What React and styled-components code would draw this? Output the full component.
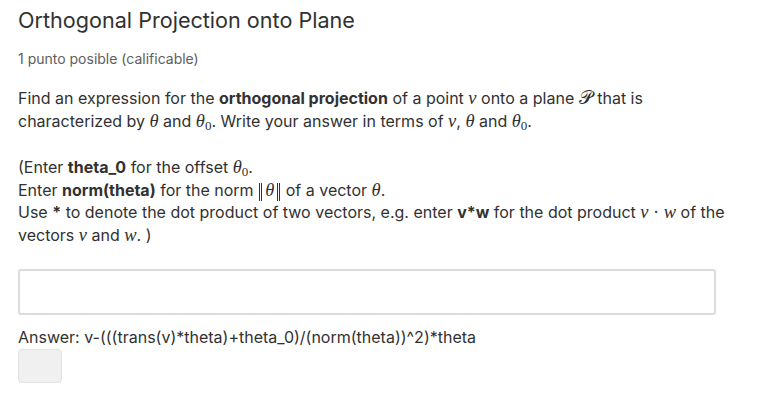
import React from "react";
import styled, { createGlobalStyle } from "styled-components";

const GlobalStyle = createGlobalStyle`
  body {
    margin: 0;
    background: #ffffff;
    font-family: Inter, "Open Sans", sans-serif;
    color: #313131;
  }
`;

const Page = styled.div`
  padding: 6px 40px 0 18px;
`;

const Title = styled.h2`
  margin: 0;
  font-size: 21.6px;
  font-weight: 400;
  line-height: 28px;
  color: #313131;
`;

const Points = styled.div`
  margin-top: 16px;
  font-size: 14px;
  line-height: 18px;
  color: #5e5e5e;
`;

const Para = styled.p`
  margin: ${(p) => p.$top || 0}px 0 0;
  max-width: 715px;
  font-size: 16px;
  line-height: 22.5px;

  b {
    font-weight: 700;
  }
`;

const M = styled.span`
  font-family: "Liberation Serif", "DejaVu Serif", serif;
  font-style: ${(p) => (p.$upright ? "normal" : "italic")};
  font-size: ${(p) => p.$size || 18.5}px;
  line-height: 0;
`;

const Sub = styled.sub`
  font-family: "Liberation Serif", "DejaVu Serif", serif;
  font-style: normal;
  font-size: 13px;
  vertical-align: -3px;
  line-height: 0;
`;

const Norm = styled.span`
  display: inline-block;
  padding: 0 3px;
  height: 18px;
  line-height: 15px;
  border-left: 3px double #313131;
  border-right: 3px double #313131;
  margin: 0 1px;
`;

const Input = styled.input`
  display: block;
  box-sizing: border-box;
  margin-top: 23px;
  width: 698px;
  height: 46px;
  border: 2px solid #dcdcdc;
  border-radius: 3px;
  background: #fff;
  outline: none;
`;

const Answer = styled.div`
  margin-top: 12px;
  font-size: 16px;
  line-height: 20px;
`;

const Button = styled.button`
  display: block;
  margin-top: 2px;
  width: 44px;
  height: 34px;
  border: 1px solid #e2e2e2;
  border-radius: 4px;
  background: #f0f0f0;
`;

const Theta0 = () => (
  <M>
    θ<Sub>0</Sub>
  </M>
);

export default function App() {
  return (
    <>
      <GlobalStyle />
      <Page>
        <Title>Orthogonal Projection onto Plane</Title>
        <Points>1 punto posible (calificable)</Points>
        <Para $top={19}>
          Find an expression for the <b>orthogonal projection</b> of a point <M>v</M> onto a plane{" "}
          <M $upright>𝒫</M> that is characterized by <M>θ</M> and <Theta0 />. Write your answer in
          terms of <M>v</M>, <M>θ</M> and <Theta0 />.
        </Para>
        <Para $top={24}>
          (Enter <b>theta_0</b> for the offset <Theta0 />.
          <br />
          Enter <b>norm(theta)</b> for the norm{" "}
          <Norm>
            <M>θ</M>
          </Norm>{" "}
          of a vector <M>θ</M>.
          <br />
          Use <b>*</b> to denote the dot product of two vectors, e.g. enter <b>v*w</b> for the dot
          product <M>v</M> <M $upright>·</M> <M>w</M> of the vectors <M>v</M> and <M>w</M>. )
        </Para>
        <Input type="text" />
        <Answer>Answer: v-(((trans(v)*theta)+theta_0)/(norm(theta))^2)*theta</Answer>
        <Button />
      </Page>
    </>
  );
}
